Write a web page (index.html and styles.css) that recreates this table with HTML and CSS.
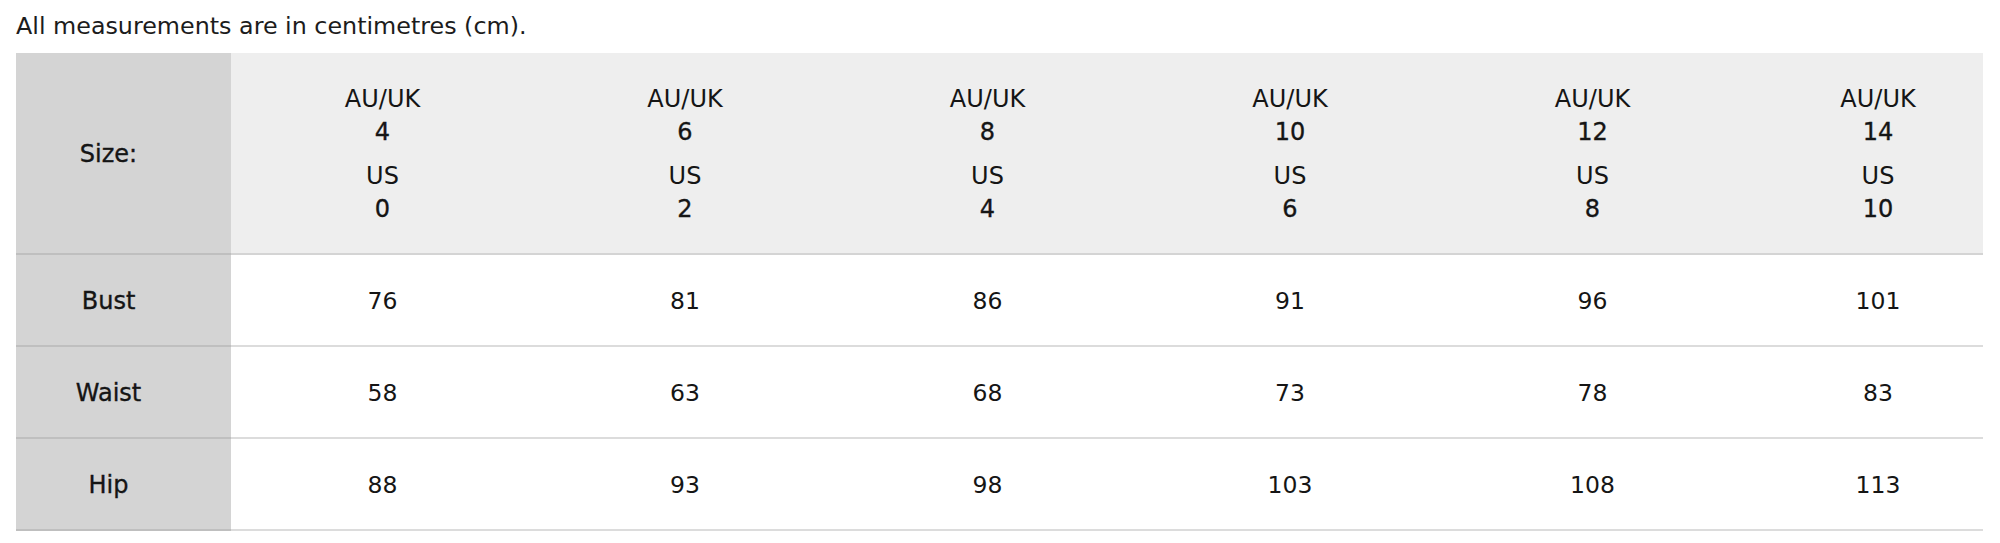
FILE: index.html
```html
<!DOCTYPE html>
<html lang="en">
<head>
<meta charset="utf-8">
<title>Size chart</title>
<link rel="stylesheet" href="styles.css">
</head>
<body>
<div class="page">
  <p class="note">All measurements are in centimetres (cm).</p>
  <div class="chart">
    <div class="cell label head-row medium">Size:</div>
    <div class="cell head-row"><div class="sizes"><div class="size"><span>AU/UK</span><span class="medium">4</span></div><div class="size"><span>US</span><span class="medium">0</span></div></div></div>
    <div class="cell head-row"><div class="sizes"><div class="size"><span>AU/UK</span><span class="medium">6</span></div><div class="size"><span>US</span><span class="medium">2</span></div></div></div>
    <div class="cell head-row"><div class="sizes"><div class="size"><span>AU/UK</span><span class="medium">8</span></div><div class="size"><span>US</span><span class="medium">4</span></div></div></div>
    <div class="cell head-row"><div class="sizes"><div class="size"><span>AU/UK</span><span class="medium">10</span></div><div class="size"><span>US</span><span class="medium">6</span></div></div></div>
    <div class="cell head-row"><div class="sizes"><div class="size"><span>AU/UK</span><span class="medium">12</span></div><div class="size"><span>US</span><span class="medium">8</span></div></div></div>
    <div class="cell head-row last"><div class="sizes"><div class="size"><span>AU/UK</span><span class="medium">14</span></div><div class="size"><span>US</span><span class="medium">10</span></div></div></div>

    <div class="cell label medium">Bust</div>
    <div class="cell num">76</div>
    <div class="cell num">81</div>
    <div class="cell num">86</div>
    <div class="cell num">91</div>
    <div class="cell num">96</div>
    <div class="cell num last">101</div>

    <div class="cell label medium">Waist</div>
    <div class="cell num">58</div>
    <div class="cell num">63</div>
    <div class="cell num">68</div>
    <div class="cell num">73</div>
    <div class="cell num">78</div>
    <div class="cell num last">83</div>

    <div class="cell label medium">Hip</div>
    <div class="cell num">88</div>
    <div class="cell num">93</div>
    <div class="cell num">98</div>
    <div class="cell num">103</div>
    <div class="cell num">108</div>
    <div class="cell num last">113</div>
  </div>
</div>
</body>
</html>
```

FILE: styles.css
```css
html, body {
  margin: 0;
  padding: 0;
  background: #ffffff;
}

body {
  font-family: "DejaVu Sans", "Noto Sans", sans-serif;
  font-size: 24px;
  color: #151515;
}

.page {
  padding: 9px 17px 0 16px;
}

.note {
  margin: 0 0 10px 0;
  font-size: 23.8px;
  line-height: 34px;
  color: #1c1c1c;
}

.chart {
  display: grid;
  grid-template-columns: 215px 303px 302px 303px 302px 303px 239px;
  width: 1967px;
}

.cell {
  box-sizing: border-box;
  height: 92px;
  padding-top: 2px;
  display: flex;
  align-items: center;
  justify-content: center;
  line-height: 33px;
  border-bottom: 2px solid #dcdcdc;
  background: #ffffff;
  text-align: center;
}

.cell.num {
  font-size: 23.5px;
}

.cell.head-row {
  height: 202px;
  background: #eeeeee;
  border-bottom-color: #d4d4d4;
}

.cell.label {
  background: #d4d4d4;
  border-bottom-color: #bfbfbf;
  padding-right: 30px;
}

.cell.last {
  padding-left: 29px;
}

.sizes {
  display: flex;
  flex-direction: column;
  gap: 11px;
}

.size {
  display: flex;
  flex-direction: column;
  align-items: center;
}

.medium {
  -webkit-text-stroke: 0.35px currentColor;
}
```
